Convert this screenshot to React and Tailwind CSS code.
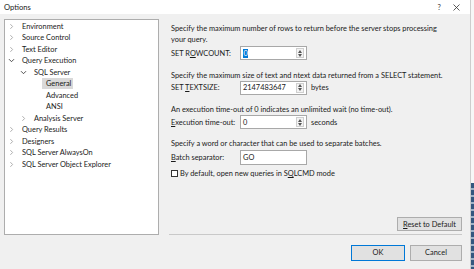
import React from "react";

const tree = [
    { label: "Environment", level: 0, state: "closed" },
    { label: "Source Control", level: 0, state: "closed" },
    { label: "Text Editor", level: 0, state: "closed" },
    { label: "Query Execution", level: 0, state: "open" },
    { label: "SQL Server", level: 1, state: "open" },
    { label: "General", level: 2, selected: true },
    { label: "Advanced", level: 2 },
    { label: "ANSI", level: 2 },
    { label: "Analysis Server", level: 1, state: "closed" },
    { label: "Query Results", level: 0, state: "closed" },
    { label: "Designers", level: 0, state: "closed" },
    { label: "SQL Server AlwaysOn", level: 0, state: "closed" },
    { label: "SQL Server Object Explorer", level: 0, state: "closed" },
];

function Chevron({ state }) {
    if (state === "open") {
        return (
            <svg width="7" height="7" viewBox="0 0 7 7" className="shrink-0">
                <path d="M1 2.2 L3.5 4.7 L6 2.2" fill="none" stroke="#3c3c3c" strokeWidth="0.9" />
            </svg>
        );
    }
    if (state === "closed") {
        return (
            <svg width="7" height="7" viewBox="0 0 7 7" className="shrink-0">
                <path d="M2.4 1.2 L4.6 3.5 L2.4 5.8" fill="none" stroke="#a6a6a6" strokeWidth="0.9" />
            </svg>
        );
    }
    return <span className="w-[7px] shrink-0" />;
}

function TreeRow({ item }) {
    const pad = ["pl-[3px]", "pl-[15px]", "pl-[27px]"][item.level];
    return (
        <div className={`h-[11.5px] flex items-center whitespace-nowrap ${pad}`}>
            <Chevron state={item.state} />
            <span
                className={`leading-[11px] ${
                    item.selected
                        ? "ml-[3px] pl-[4px] pr-[2px] bg-[#d9d9d9]"
                        : "ml-[6px] px-[1px]"
                }`}
            >
                {item.label}
            </span>
        </div>
    );
}

function Spinner() {
    return (
        <div className="ml-auto mr-[2px] w-[8px] h-[10px] flex flex-col border border-[#cfcfcf] bg-[#f3f3f3]">
            <div className="flex-1 flex items-center justify-center">
                <svg width="4" height="3" viewBox="0 0 4 3">
                    <path d="M0 3 L2 0 L4 3 Z" fill="#555" />
                </svg>
            </div>
            <div className="flex-1 flex items-center justify-center">
                <svg width="4" height="3" viewBox="0 0 4 3">
                    <path d="M0 0 L4 0 L2 3 Z" fill="#555" />
                </svg>
            </div>
        </div>
    );
}

function Field({ label, children, spinner, suffix, height = "h-[14px]" }) {
    return (
        <div className={`flex items-center whitespace-nowrap ${height}`}>
            <div className="w-[69px] leading-[11px]">{label}</div>
            <div className={`w-[67px] ${height} bg-white border border-[#a8a8a8] flex items-center pl-[2px]`}>
                {children}
                {spinner && <Spinner />}
            </div>
            {suffix && <span className="ml-[4px] leading-[11px]">{suffix}</span>}
        </div>
    );
}

export default function App() {
    return (
        <div className="w-[474px] h-[269px] flex bg-white overflow-hidden text-[7.4px] text-[#1a1a1a] font-['Lato',sans-serif]">
            <div className="w-[471px] h-full flex flex-col bg-[#f0f0f0] border-r border-[#cdcdcd]">
                <div className="h-[14px] bg-white flex items-center pl-[4px] pr-[10px]">
                    <span className="text-[7.6px] leading-[11px]">Options</span>
                    <span className="ml-auto text-[7.6px] leading-[11px] text-[#333]">?</span>
                    <svg width="7" height="7" viewBox="0 0 7 7" className="ml-[12px]">
                        <path d="M0.5 0.5 L6.5 6.5 M6.5 0.5 L0.5 6.5" stroke="#333" strokeWidth="0.8" />
                    </svg>
                </div>

                <div className="flex-1 flex pl-[4px] pt-[5px]">
                    <div className="w-[155px] h-[216px] shrink-0 bg-white border border-[#adadad] pt-[0.5px]">
                        {tree.map((item) => (
                            <TreeRow key={item.label} item={item} />
                        ))}
                    </div>

                    <div className="ml-[12px] w-[291px] flex flex-col pt-[4px] whitespace-nowrap">
                        <p className="leading-[11px]">
                            Specify the maximum number of rows to return before the server stops processing
                            <br />
                            your query.
                        </p>
                        <div className="mt-[1px]">
                            <Field
                                label={<>SET R<span className="underline">O</span>WCOUNT:</>}
                                spinner
                            >
                                <span className="bg-[#0078d7] text-white leading-[9px] px-[0.5px]">0</span>
                            </Field>
                        </div>

                        <p className="leading-[11px] mt-[9.5px]">
                            Specify the maximum size of text and ntext data returned from a SELECT statement.
                        </p>
                        <Field
                            label={<>SET <span className="underline">T</span>EXTSIZE:</>}
                            spinner
                            suffix="bytes"
                        >
                            <span className="leading-[11px]">2147483647</span>
                        </Field>

                        <p className="leading-[11px] mt-[9.5px]">
                            An execution time-out of 0 indicates an unlimited wait (no time-out).
                        </p>
                        <Field
                            label={<><span className="underline">E</span>xecution time-out:</>}
                            spinner
                            suffix="seconds"
                        >
                            <span className="leading-[11px]">0</span>
                        </Field>

                        <p className="leading-[11px] mt-[9px]">
                            Specify a word or character that can be used to separate batches.
                        </p>
                        <div className="mt-[1px]">
                            <Field
                                label={<><span className="underline">B</span>atch separator:</>}
                                height="h-[15px]"
                            >
                                <span className="leading-[11px]">GO</span>
                            </Field>
                        </div>

                        <label className="mt-[3px] h-[11px] flex items-center">
                            <span className="w-[7px] h-[7px] border border-[#333] bg-white" />
                            <span className="ml-[2px] leading-[11px]">
                                By default, open new queries in S<span className="underline">Q</span>LCMD mode
                            </span>
                        </label>

                        <button className="self-end mt-[38px] w-[65px] h-[14px] bg-[#e1e1e1] border border-[#adadad] flex items-center justify-center leading-[11px]">
                            <span><span className="underline">R</span>eset to Default</span>
                        </button>

                        <div className="mt-[3px] -ml-[2px] h-[1px] bg-[#c9c9c9]" />

                        <div className="mt-[9.5px] flex justify-end gap-[5px]">
                            <button className="w-[54px] h-[16px] bg-[#e1e1e1] border border-[#0078d7] leading-[11px]">
                                OK
                            </button>
                            <button className="w-[52px] h-[16px] bg-[#e1e1e1] border border-[#adadad] leading-[11px]">
                                Cancel
                            </button>
                        </div>
                    </div>
                </div>
            </div>

            <div className="w-[3px] h-full flex flex-col">
                <div className="h-[183px] bg-[#f7f7f7]" />
                <div className="flex-1 bg-[repeating-linear-gradient(to_bottom,#34577f_0px,#34577f_5px,#9fb3c8_5px,#9fb3c8_7px)]" />
            </div>
        </div>
    );
}
